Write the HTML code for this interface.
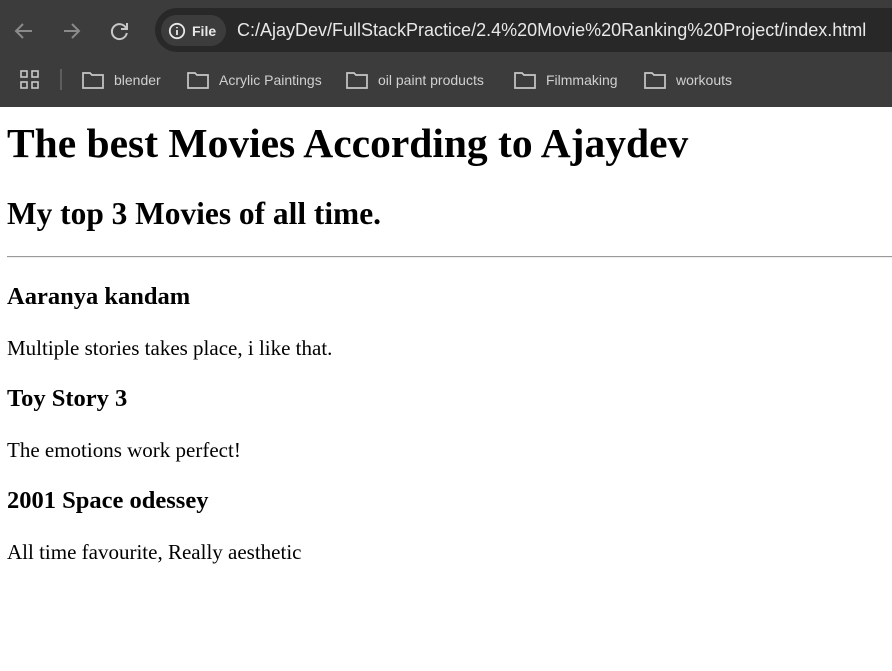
<!DOCTYPE html>
<html><head><meta charset="utf-8"><style>
body{margin:0;width:892px;height:671px;background:#fff;position:relative;overflow:hidden;font-family:"Liberation Serif",serif;color:#000}
.tb{position:absolute;left:0;top:0;width:892px;height:57px;background:#3c3c3c}
.bm{position:absolute;left:0;top:57px;width:892px;height:50px;background:#3c3c3c}
.omni{position:absolute;left:155px;top:8px;width:760px;height:44px;border-radius:22px;background:#282828}
.chip{position:absolute;left:161px;top:15px;width:65px;height:31px;border-radius:16px;background:#3c3c3c}
.ui{font-family:"Liberation Sans",sans-serif;position:absolute;white-space:nowrap}
.t{position:absolute;left:7px;white-space:nowrap;line-height:1;font-weight:bold}
.p{position:absolute;left:7px;white-space:nowrap;line-height:1;font-size:21px}
</style></head><body>
<div class="tb"></div><div class="bm"></div>
<svg class="ui" style="left:12px;top:20px" width="120" height="22" viewBox="0 0 120 22" fill="none" stroke="#8a8a8a" stroke-width="2">
<path d="M20 11H5M11 4l-7 7 7 7"/>
<path d="M52 11h15M60 4l7 7-7 7"/>
<path stroke="#c8c8c8" d="M114 8a7.5 7.5 0 1 0 0.8 5M115 3v6h-6"/>
</svg>
<div class="omni"></div><div class="chip"></div>
<svg class="ui" style="left:168px;top:22px" width="18" height="18" viewBox="0 0 18 18" fill="none" stroke="#e8e8e8" stroke-width="1.8"><circle cx="9" cy="9" r="7.2"/><path d="M9 8v5M9 5v1.2"/></svg>
<div class="ui" style="left:192px;top:23px;font-size:14px;font-weight:bold;color:#e8e8e8">File</div>
<div class="ui" style="left:237px;top:20px;font-size:18px;color:#e8e8e8">C:/AjayDev/FullStackPractice/2.4%20Movie%20Ranking%20Project/index.html</div>
<svg class="ui" style="left:20px;top:70px" width="20" height="20" viewBox="0 0 20 20" fill="none" stroke="#c8c8c8" stroke-width="1.6"><rect x="1" y="1" width="6" height="6"/><rect x="12" y="1" width="6" height="6"/><rect x="1" y="12" width="6" height="6"/><rect x="12" y="12" width="6" height="6"/></svg>
<div class="ui" style="left:60px;top:69px;width:2px;height:21px;background:#5e5e5e"></div>
<svg class="ui" style="left:0;top:69px" width="892" height="22" fill="none" stroke="#c8c8c8" stroke-width="1.7">
<path d="M83 4h7l2 2h11v13H83z"/><path d="M188 4h7l2 2h11v13H188z"/><path d="M347 4h7l2 2h11v13H347z"/><path d="M515 4h7l2 2h11v13H515z"/><path d="M645 4h7l2 2h11v13H645z"/>
</svg>
<div class="ui" style="left:114px;top:72px;font-size:14px;color:#d0d0d0">blender</div>
<div class="ui" style="left:219px;top:72px;font-size:14px;color:#d0d0d0">Acrylic Paintings</div>
<div class="ui" style="left:378px;top:72px;font-size:14px;color:#d0d0d0">oil paint products</div>
<div class="ui" style="left:546px;top:72px;font-size:14px;color:#d0d0d0">Filmmaking</div>
<div class="ui" style="left:676px;top:72px;font-size:14px;color:#d0d0d0">workouts</div>

<div class="t" style="top:123px;font-size:41.5px">The best Movies According to Ajaydev</div>
<div class="t" style="top:198px;font-size:31.4px">My top 3 Movies of all time.</div>
<div style="position:absolute;left:7px;top:256px;width:885px;height:0;border-top:1px solid #9a9a9a;border-bottom:1px solid #eee"></div>
<div class="t" style="top:285px;font-size:24.5px">Aaranya kandam</div>
<div class="p" style="top:338px">Multiple stories takes place, i like that.</div>
<div class="t" style="top:387px;font-size:24.5px">Toy Story 3</div>
<div class="p" style="top:440px">The emotions work perfect!</div>
<div class="t" style="top:489px;font-size:24.5px">2001 Space odessey</div>
<div class="p" style="top:542px">All time favourite, Really aesthetic</div>
</body></html>
